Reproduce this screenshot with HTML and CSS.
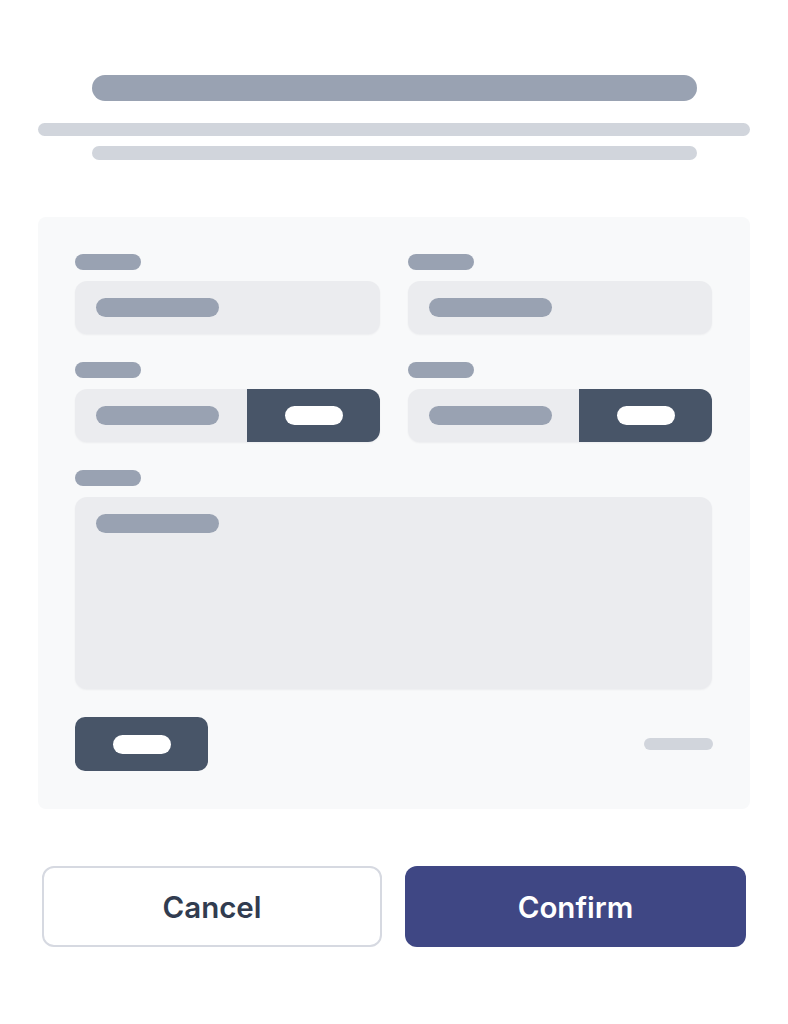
FILE: index.html
```html
<!DOCTYPE html>
<html lang="en">
<head>
<meta charset="utf-8">
<title>Form</title>
<link rel="stylesheet" href="styles.css">
</head>
<body>
<div class="page">
  <header class="hero">
    <div class="bar bar-title"></div>
    <div class="bar bar-sub"></div>
    <div class="bar bar-sub2"></div>
  </header>

  <section class="card">
    <div class="grid">
      <div class="field">
        <div class="label"></div>
        <div class="input"><span class="ph"></span></div>
      </div>
      <div class="field">
        <div class="label"></div>
        <div class="input"><span class="ph"></span></div>
      </div>
      <div class="field">
        <div class="label"></div>
        <div class="input input-group">
          <div class="ig-main"><span class="ph"></span></div>
          <div class="ig-btn"><span class="pill"></span></div>
        </div>
      </div>
      <div class="field">
        <div class="label"></div>
        <div class="input input-group">
          <div class="ig-main"><span class="ph"></span></div>
          <div class="ig-btn"><span class="pill"></span></div>
        </div>
      </div>
      <div class="field wide">
        <div class="label"></div>
        <div class="textarea"><span class="ph"></span></div>
      </div>
    </div>
    <div class="card-foot">
      <div class="dark-btn"><span class="pill"></span></div>
      <div class="hint"></div>
    </div>
  </section>

  <div class="actions">
    <button class="btn btn-cancel" type="button">Cancel</button>
    <button class="btn btn-confirm" type="button">Confirm</button>
  </div>
</div>
</body>
</html>
```

FILE: styles.css
```css
* { box-sizing: border-box; }

html, body {
  margin: 0;
  padding: 0;
  background: #ffffff;
  font-family: Inter, "Noto Sans", "Liberation Sans", sans-serif;
}

.page {
  width: 788px;
  padding: 75px 38px 0 38px;
}

.hero {
  display: flex;
  flex-direction: column;
  align-items: center;
}

.bar {
  border-radius: 999px;
}

.bar-title {
  width: 605px;
  height: 26px;
  background: #99a2b2;
}

.bar-sub {
  width: 712px;
  height: 13px;
  margin-top: 22px;
  background: #d1d5dc;
}

.bar-sub2 {
  width: 605px;
  height: 14px;
  margin-top: 10px;
  background: #d1d5dc;
}

.card {
  margin-top: 57px;
  background: #f8f9fa;
  border-radius: 8px;
  padding: 37px 37px 38px 37px;
}

.grid {
  display: grid;
  grid-template-columns: 305px 304px;
  column-gap: 28px;
  row-gap: 28px;
}

.field {
  display: flex;
  flex-direction: column;
  gap: 11px;
}

.wide {
  grid-column: 1 / -1;
}

.label {
  width: 66px;
  height: 16px;
  border-radius: 999px;
  background: #99a2b2;
}

.input {
  height: 53px;
  border-radius: 12px;
  background: #ebecef;
  box-shadow: 0 1px 2px rgba(15, 23, 42, 0.05);
  display: flex;
  align-items: center;
  padding-left: 21px;
}

.ph {
  display: block;
  width: 123px;
  height: 19px;
  border-radius: 999px;
  background: #99a2b2;
}

.input-group {
  padding-left: 0;
  overflow: hidden;
  align-items: stretch;
}

.ig-main {
  flex: 1;
  display: flex;
  align-items: center;
  padding-left: 21px;
}

.ig-btn {
  width: 133px;
  background: #485568;
  display: flex;
  align-items: center;
  justify-content: center;
}

.pill {
  display: block;
  width: 58px;
  height: 19px;
  border-radius: 999px;
  background: #ffffff;
}

.textarea {
  height: 192px;
  border-radius: 12px;
  background: #ebecef;
  box-shadow: 0 1px 2px rgba(15, 23, 42, 0.05);
  padding: 17px 21px;
}

.card-foot {
  margin-top: 28px;
  display: flex;
  align-items: center;
  justify-content: space-between;
}

.dark-btn {
  width: 133px;
  height: 54px;
  border-radius: 10px;
  background: #485568;
  display: flex;
  align-items: center;
  justify-content: center;
}

.hint {
  width: 69px;
  height: 12px;
  border-radius: 999px;
  background: #d1d5dc;
}

.actions {
  margin-top: 57px;
  padding: 0 4px;
  display: grid;
  grid-template-columns: 340px 341px;
  column-gap: 23px;
}

.btn {
  height: 81px;
  border-radius: 12px;
  font-family: Inter, "Noto Sans", "Liberation Sans", sans-serif;
  font-size: 29.5px;
  font-weight: 600;
  cursor: pointer;
}

.btn-cancel {
  background: #ffffff;
  border: 2px solid #d6d9e1;
  color: #313c50;
}

.btn-confirm {
  background: #3f4784;
  border: none;
  color: #ffffff;
}
```
